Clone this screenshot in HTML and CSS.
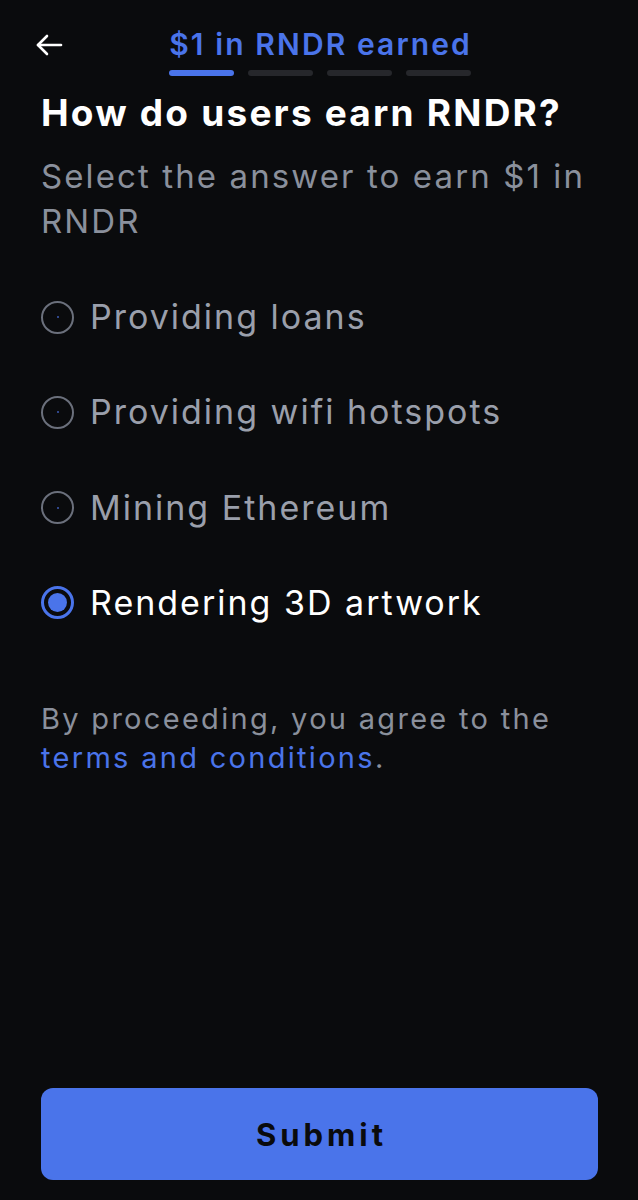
FILE: index.html
```html
<!DOCTYPE html>
<html lang="en">
<head>
<meta charset="utf-8">
<title>$1 in RNDR earned</title>
<link rel="stylesheet" href="styles.css">
</head>
<body>
<div class="page">
  <header class="top">
    <button class="back" aria-label="Back">
      <svg width="28" height="24" viewBox="0 0 28 24" fill="none" stroke="#ffffff" stroke-width="2.6" stroke-linecap="round" stroke-linejoin="round"><path d="M26 12H3"/><path d="M12 3L3 12l9 9"/></svg>
    </button>
    <div class="title-wrap">
      <div class="title">$1 in RNDR earned</div>
      <div class="steps">
        <span class="step active"></span>
        <span class="step"></span>
        <span class="step"></span>
        <span class="step"></span>
      </div>
    </div>
    <div></div>
  </header>

  <main class="content">
    <h1 class="heading">How do users earn RNDR?</h1>
    <p class="sub">Select the answer to earn $1 in RNDR</p>

    <ul class="options">
      <li class="option"><span class="radio"><span class="dot"></span></span><span class="label">Providing loans</span></li>
      <li class="option"><span class="radio"><span class="dot"></span></span><span class="label">Providing wifi hotspots</span></li>
      <li class="option"><span class="radio"><span class="dot"></span></span><span class="label">Mining Ethereum</span></li>
      <li class="option selected"><span class="radio"><span class="dot"></span></span><span class="label">Rendering 3D artwork</span></li>
    </ul>

    <p class="legal">By proceeding, you agree to the <a class="link" href="#">terms and conditions</a>.</p>
  </main>

  <button class="submit">Submit</button>
</div>
</body>
</html>
```

FILE: styles.css
```css
* { box-sizing: border-box; }
html, body { margin: 0; padding: 0; background: #0a0b0d; }
body { font-family: "Inter", "Noto Sans", sans-serif; color: #ffffff; }

.page {
  min-height: 1200px;
  display: flex;
  flex-direction: column;
  padding: 0 40px 20px 41px;
}

.top {
  display: grid;
  grid-template-columns: 1fr auto 1fr;
  align-items: start;
  padding-top: 26px;
}
.back {
  background: none;
  border: 0;
  padding: 0;
  margin: 7px 0 0 -6px;
  width: 28px;
  height: 24px;
  cursor: pointer;
}
.back svg { display: block; }
.title-wrap { display: flex; flex-direction: column; align-items: center; }
.title {
  color: #4a74ea;
  font-size: 30px;
  font-weight: 600;
  line-height: 37px;
  letter-spacing: 2.1px;
  margin-right: -2.1px;
}
.steps { display: flex; gap: 14px; margin-top: 7px; }
.step { width: 65px; height: 6px; border-radius: 3px; background: #26272b; }
.step.active { background: #4a74ea; }

.content { display: flex; flex-direction: column; }
.heading {
  margin: 15px 0 0;
  font-size: 37px;
  font-weight: 700;
  line-height: 44px;
  letter-spacing: 2.2px;
  color: #ffffff;
}
.sub {
  margin: 19px 0 0;
  font-size: 33px;
  line-height: 45px;
  letter-spacing: 2.1px;
  color: #8a909c;
  max-width: 556px;
}

.options {
  list-style: none;
  margin: 51px 0 0;
  padding: 0;
  display: flex;
  flex-direction: column;
  gap: 51.3px;
}
.option {
  display: flex;
  align-items: center;
  gap: 16px;
  font-size: 34px;
  line-height: 44px;
  letter-spacing: 2px;
  color: #9a9fab;
}
.radio {
  width: 33px;
  height: 33px;
  border-radius: 50%;
  border: 2.5px solid #6b707c;
  display: flex;
  align-items: center;
  justify-content: center;
  flex: none;
}
.dot { width: 2px; height: 2px; border-radius: 50%; background: #3d5bb5; }
.option.selected { color: #ffffff; }
.option.selected .radio { border: 3px solid #4a74ea; }
.option.selected .dot { width: 19px; height: 19px; background: #4a74ea; }

.legal {
  margin: 74px 0 0;
  font-size: 29px;
  line-height: 39px;
  letter-spacing: 2.3px;
  color: #8a909c;
  max-width: 540px;
}
.link { color: #4a74ea; text-decoration: none; }

.submit {
  margin-top: auto;
  height: 92px;
  width: 100%;
  border: 0;
  border-radius: 12px;
  background: #4a74ea;
  color: #0a0b0d;
  font-family: "Inter", "Noto Sans", sans-serif;
  font-size: 31px;
  font-weight: 700;
  letter-spacing: 4px;
  text-indent: 4px;
  cursor: pointer;
}
```
